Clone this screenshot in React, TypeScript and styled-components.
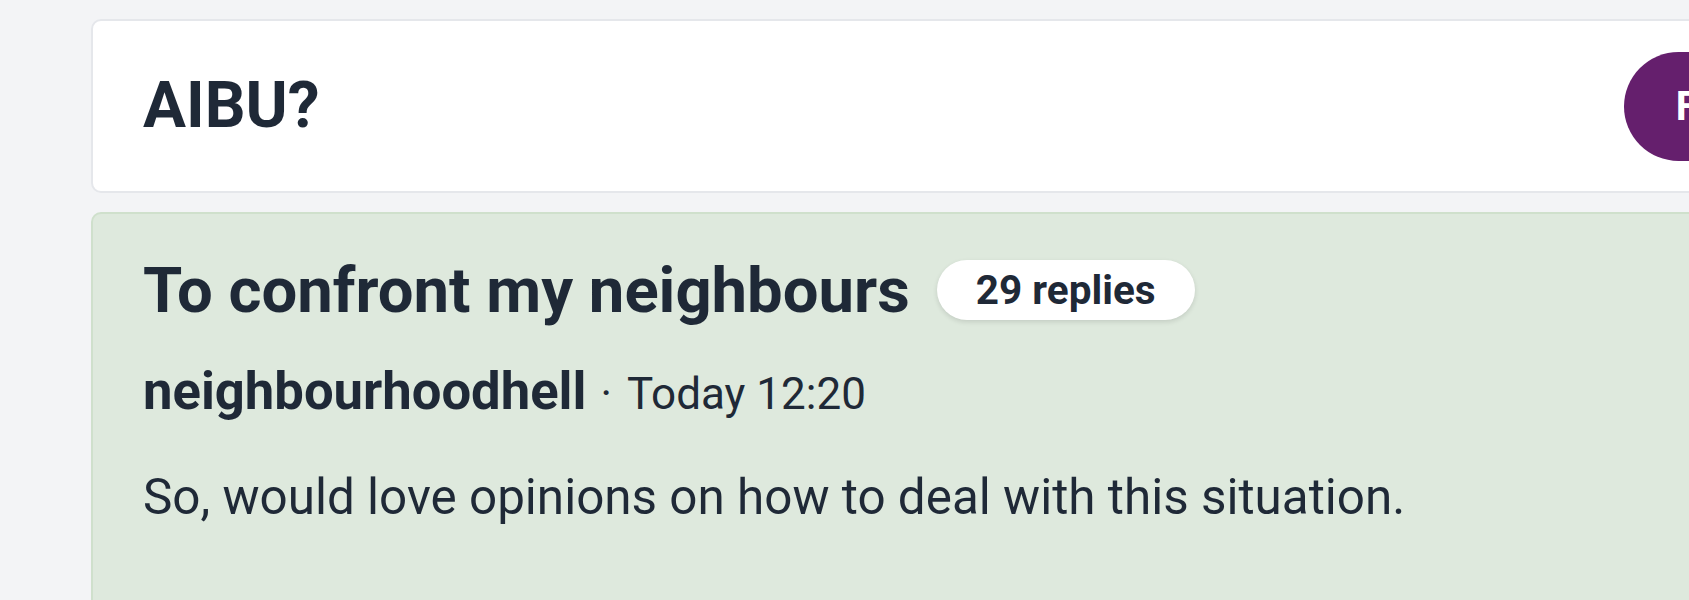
import React from "react";
import styled, { createGlobalStyle } from "styled-components";

const GlobalStyle = createGlobalStyle`
  html, body {
    margin: 0;
    padding: 0;
    background: #f3f4f6;
    overflow: hidden;
  }
  body {
    font-family: Roboto, "Noto Sans", Arial, sans-serif;
    color: #1f2937;
  }
`;

const Page = styled.div`
  display: flex;
  flex-direction: column;
  gap: 19px;
  padding: 19px 0 0 91px;
  width: 1760px;
`;

const Header = styled.header`
  display: flex;
  align-items: center;
  justify-content: space-between;
  height: 170px;
  padding: 0 0 0 50px;
  background: #fff;
  border: 2px solid #e5e7eb;
  border-radius: 10px;
`;

const BoardTitle = styled.h1`
  margin: 0;
  font-size: 64px;
  line-height: 1.2;
  font-weight: 700;
`;

const FollowButton = styled.button`
  height: 109px;
  margin-right: 4px;
  padding: 0 52px;
  border: none;
  border-radius: 999px;
  background: #651f6d;
  color: #fff;
  font-family: inherit;
  font-size: 40px;
  font-weight: 700;
`;

const ThreadCard = styled.article`
  display: flex;
  flex-direction: column;
  min-height: 420px;
  padding: 38px 50px 0;
  background: #dee9dd;
  border: 2px solid #cfe0cc;
  border-radius: 10px;
`;

const TitleRow = styled.div`
  display: flex;
  align-items: center;
  gap: 27px;
`;

const ThreadTitle = styled.h2`
  margin: 0;
  font-size: 63.4px;
  line-height: 1.2;
  font-weight: 700;
`;

const Replies = styled.span`
  display: inline-flex;
  align-items: center;
  height: 60px;
  padding: 0 39px;
  background: #fff;
  border-radius: 999px;
  box-shadow: 0 2px 5px rgba(0, 0, 0, 0.12);
  font-size: 40.5px;
  font-weight: 700;
`;

const Meta = styled.div`
  margin-top: 32px;
  font-size: 52.6px;
  line-height: 1.2;
`;

const Author = styled.span`
  font-weight: 700;
`;

const Separator = styled.span`
  margin: 0 15px 0 14px;
  font-size: 44px;
`;

const Time = styled.span`
  font-size: 44px;
`;

const Body = styled.p`
  margin: 45px 0 0;
  font-size: 49.4px;
  line-height: 1.2;
`;

export default function App() {
  return (
    <>
      <GlobalStyle />
      <Page>
        <Header>
          <BoardTitle>AIBU?</BoardTitle>
          <FollowButton>Follow</FollowButton>
        </Header>
        <ThreadCard>
          <TitleRow>
            <ThreadTitle>To confront my neighbours</ThreadTitle>
            <Replies>29 replies</Replies>
          </TitleRow>
          <Meta>
            <Author>neighbourhoodhell</Author>
            <Separator>·</Separator>
            <Time>Today 12:20</Time>
          </Meta>
          <Body>So, would love opinions on how to deal with this situation.</Body>
        </ThreadCard>
      </Page>
    </>
  );
}
